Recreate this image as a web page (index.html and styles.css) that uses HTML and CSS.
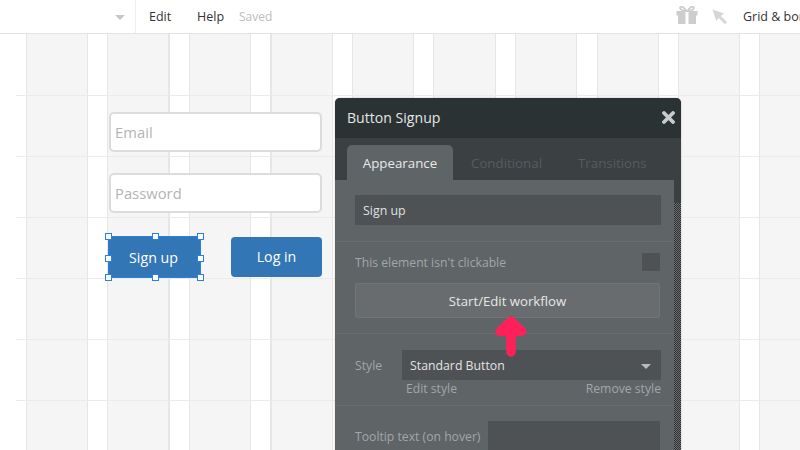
FILE: index.html
```html
<!DOCTYPE html>
<html lang="en">
<head>
<meta charset="utf-8">
<title>Button Signup</title>
<link rel="stylesheet" href="styles.css">
</head>
<body>
<div class="page">
  <header class="topbar">
    <div class="page-picker"><span class="caret"></span></div>
    <nav class="menu">
      <span class="menu-item edit">Edit</span>
      <span class="menu-item help">Help</span>
      <span class="saved">Saved</span>
    </nav>
    <div class="tools">
      <svg class="gift" width="22" height="18" viewBox="0 0 22 18"><path d="M0.500 5h9v4.500h-9zM12.500 5h9v4.500h-9zM2 9.500h7.500V18H2zM12.500 9.500H20V18h-7.500z" fill="#cdcdcd"/><path d="M10.500 5C8 1 5.500 0 4.500 1S4.500 5 10.500 5zM11.500 5C14 1 16.500 0 17.500 1S17.500 5 11.500 5z" fill="none" stroke="#cdcdcd" stroke-width="1.800"/></svg>
      <svg class="pointer" width="16" height="16" viewBox="0 0 16 16"><path d="M0.500 0.500L12 4.500 8.800 7 15 13.200 13 15.200 6.800 9 4.300 12z" fill="#d6d6d6"/></svg>
      <span class="menu-item grid-label">Grid &amp; borders</span>
    </div>
  </header>
  <main class="canvas">
    <div class="form">
      <div class="input">Email</div>
      <div class="input">Password</div>
      <div class="actions">
        <div class="btn selected">Sign up
          <i class="h tl"></i><i class="h tc"></i><i class="h tr"></i>
          <i class="h ml"></i><i class="h mr"></i>
          <i class="h bl"></i><i class="h bc"></i><i class="h br"></i>
        </div>
        <div class="btn login">Log in</div>
      </div>
    </div>
    <section class="panel">
      <div class="panel-head"><span>Button Signup</span>
        <svg class="close" width="13" height="13" viewBox="0 0 13 13"><path d="M2 2l9 9M11 2l-9 9" stroke="#c9cbcc" stroke-width="3.800" stroke-linecap="round"/></svg>
      </div>
      <div class="tabs">
        <span class="tab active">Appearance</span>
        <span class="tab t2">Conditional</span>
        <span class="tab t3">Transitions</span>
      </div>
      <div class="panel-main">
        <div class="panel-body">
          <div class="sec sec-a"><div class="field">Sign up</div></div>
          <div class="sec sec-b">
            <div class="check-row"><span>This element isn't clickable</span><i class="check"></i></div>
            <div class="wf">Start/Edit workflow</div>
          </div>
          <div class="sec sec-c">
            <div class="style-row">
              <span class="lbl">Style</span>
              <div class="select">Standard Button<i class="sel-caret"></i></div>
            </div>
            <div class="style-links"><span>Edit style</span><span>Remove style</span></div>
          </div>
          <div class="tip-row"><span class="lbl">Tooltip text (on hover)</span><div class="tip-field"></div></div>
        </div>
        <div class="scroll"></div>
      </div>
    </section>
    <svg class="arrow" width="34" height="42" viewBox="0 0 34 42"><path d="M17 36V6" fill="none" stroke="#ff2059" stroke-width="9.500" stroke-linecap="round"/><path d="M6 15.500L17 5 28 15.500Z" fill="#ff2059" stroke="#ff2059" stroke-width="9" stroke-linejoin="round"/></svg>
  </main>
</div>
</body>
</html>
```
FILE: styles.css
```css
* { box-sizing: border-box; }
html, body { margin: 0; height: 100%; overflow: hidden; background: #fff; }
body { font-family: "Open Sans", sans-serif; color: #333; }
.page { width: 800px; height: 450px; overflow: hidden; display: flex; flex-direction: column; }

.topbar { height: 34px; flex: none; display: flex; align-items: center; border-bottom: 1px solid #e3e3e3; background: #fff; overflow: hidden; }
.page-picker { width: 136px; flex: none; height: 33px; border-right: 1px solid #eee; display: flex; align-items: center; justify-content: flex-end; padding: 2px 10px 0 0; }
.caret { width: 0; height: 0; border-left: 5px solid transparent; border-right: 5px solid transparent; border-top: 5px solid #c3c7d0; }
.menu { display: flex; align-items: center; padding-left: 13px; width: 500px; flex: none; }
.menu-item { font-size: 12.500px; color: #333; white-space: nowrap; }
.edit { width: 48px; }
.help { width: 42px; }
.saved { font-size: 12px; color: #bdbdbd; }
.tools { display: flex; align-items: center; flex: none; }
.gift { margin-left: 40px; margin-top: -3px; }
.pointer { margin-left: 14px; }
.grid-label { margin-left: 15px; }

.canvas { position: relative; flex: 1; overflow: hidden;
  background-color: #fff;
  background-image:
    repeating-linear-gradient(to bottom, transparent 0, transparent 60px, #ebebeb 60px, #ebebeb 61px),
    repeating-linear-gradient(to right, #e6e6e6 0, #e6e6e6 1px, #f5f5f5 1px, #f5f5f5 61px, #e6e6e6 61px, #e6e6e6 62px, #fff 62px, #fff 81.500px);
  background-repeat: no-repeat;
  background-size: 100% 100%;
  background-position: 16px 1px, 26px 0;
}

.form { position: absolute; left: 108px; top: 78px; width: 214px; display: flex; flex-direction: column; gap: 21px; }
.input { height: 40px; margin-left: 1px; border: 2px solid #dcdcdc; border-radius: 5px; background: #fff; color: #b4b4b4; font-size: 14.800px; line-height: 37px; padding-left: 4px; }
.actions { display: flex; justify-content: space-between; margin-top: 2px; align-items: center; }
.btn { position: relative; color: #fff; font-size: 14.200px; font-weight: 500; background: #3276b5; text-align: center; }
.selected { width: 93px; height: 42px; line-height: 41px; border: 1px solid #2a7fe0; padding-right: 2px; }
.login { width: 91px; height: 40px; line-height: 40px; border-radius: 4px; }
.h { position: absolute; width: 7px; height: 7px; background: #fff; border: 1.500px solid #2a7fe0; }
.tl, .ml, .bl { left: -4px; }
.tr, .mr, .br { right: -4px; }
.tc, .bc { left: 43px; }
.tl, .tc, .tr { top: -4px; }
.ml, .mr { top: 18px; }
.bl, .bc, .br { bottom: -4px; }

.panel { position: absolute; left: 335px; top: 64px; width: 346px; height: 360px; border-radius: 5px 5px 0 0; background: #3b4043; overflow: hidden; display: flex; flex-direction: column; box-shadow: 0 0 2px rgba(0,0,0,.25); }
.panel-head { height: 40px; flex: none; background: #2b3234; color: #e4e6e6; font-size: 14.100px; display: flex; align-items: center; justify-content: space-between; padding: 0 6px 2px 12px; }
.tabs { height: 42px; flex: none; background: #3b4043; display: flex; align-items: flex-end; padding-left: 12px; font-size: 13.300px; color: #585c5f; }
.tab { height: 35px; line-height: 36px; }
.tab.active { width: 106px; background: #5f6467; color: #e8e9e9; border-radius: 5px 5px 0 0; text-align: center; }
.t2 { margin-left: 18px; }
.t3 { margin-left: 36px; }
.panel-main { flex: 1; display: flex; min-height: 0; }
.panel-body { width: 339px; background: #5f6467; padding-left: 20px; padding-right: 13px; font-size: 12.200px; color: #a3a6a8; }
.scroll { flex: 1; margin-top: 23px; background-image: repeating-conic-gradient(#2f3234 0 25%, #6a6e71 0 50%); background-size: 2px 2px; }
.sec { border-bottom: 1px solid #686c6f; margin: 0 -13px 0 -20px; padding: 0 13px 0 20px; }
.sec-a { height: 62px; padding-top: 15px; }
.field { width: 306px; height: 30px; background: #4e5254; color: #dfe0e0; font-size: 12.400px; line-height: 31px; padding-left: 8px; }
.sec-b { height: 92px; }
.check-row { height: 41px; display: flex; align-items: center; justify-content: space-between; width: 305px; }
.check { width: 18px; height: 18px; background: #4e5254; margin-top: -1px; }
.wf { width: 305px; height: 35px; background: #686c6f; border: 1px solid #717578; border-radius: 2px; color: #e6e7e7; font-size: 13.200px; line-height: 34px; text-align: center; }
.sec-c { height: 72px; padding-top: 16px; }
.style-row { display: flex; align-items: center; justify-content: space-between; width: 306px; }
.lbl { white-space: nowrap; }
.select { position: relative; width: 259px; height: 30px; background: #4e5254; color: #e2e3e3; font-size: 12.300px; line-height: 31px; padding-left: 8px; }
.sel-caret { position: absolute; right: 10px; top: 14px; width: 0; height: 0; border-left: 5px solid transparent; border-right: 5px solid transparent; border-top: 5px solid #b8babb; }
.style-links { display: flex; justify-content: space-between; width: 306px; padding-left: 51px; line-height: 18px; }
.tip-row { display: flex; align-items: flex-start; justify-content: space-between; width: 305px; padding-top: 15px; }
.tip-row .lbl { padding-top: 7px; }
.tip-field { width: 172px; height: 40px; background: #4e5254; }
.arrow { position: absolute; left: 494px; top: 282px; }
```
